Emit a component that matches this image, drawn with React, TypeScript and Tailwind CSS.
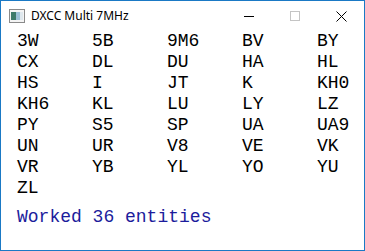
import React from "react";

const calls = [
  "3W", "5B", "9M6", "BV", "BY",
  "CX", "DL", "DU", "HA", "HL",
  "HS", "I", "JT", "K", "KH0",
  "KH6", "KL", "LU", "LY", "LZ",
  "PY", "S5", "SP", "UA", "UA9",
  "UN", "UR", "V8", "VE", "VK",
  "VR", "YB", "YL", "YO", "YU",
  "ZL",
];

function AppIcon() {
  return (
    <svg width="16" height="14" viewBox="0 0 16 14">
      <rect x="0.5" y="0.5" width="15" height="13" fill="#f4f4f4" stroke="#8a8a8a" />
      <rect x="2" y="3" width="5" height="8" fill="#3d7a6a" />
      <rect x="7" y="3" width="4" height="8" fill="#9cc0d6" />
      <rect x="11" y="3" width="3" height="8" fill="#dfe8ee" />
    </svg>
  );
}

export default function App() {
  return (
    <div className="w-[365px] h-[251px] bg-white border border-[#1a79c5] flex flex-col overflow-hidden">
      {/* Title bar */}
      <div className="h-[30px] flex items-center shrink-0" style={{ fontFamily: "'Noto Sans', 'Liberation Sans', sans-serif" }}>
        <div className="ml-[8px] flex items-center">
          <AppIcon />
        </div>
        <span className="ml-[6px] text-[12px] text-black">DXCC Multi 7MHz</span>
        <div className="ml-auto flex items-center h-full">
          <div className="w-[46px] h-full flex items-center justify-center">
            <div className="w-[10px] h-px bg-black" />
          </div>
          <div className="w-[46px] h-full flex items-center justify-center">
            <div className="w-[10px] h-[10px] border border-[#c4c4c4]" />
          </div>
          <div className="w-[46px] h-full flex items-center justify-center">
            <svg width="11" height="11" viewBox="0 0 11 11">
              <path d="M0.5 0.5 L10.5 10.5 M10.5 0.5 L0.5 10.5" stroke="#000" strokeWidth="1" />
            </svg>
          </div>
        </div>
      </div>

      {/* Client area */}
      <div
        className="pl-[16px] pt-[0px] text-[18px] leading-[21px] text-black"
        style={{ fontFamily: "'Liberation Mono', monospace" }}
      >
        <div className="grid grid-cols-[75px_75px_75px_75px_75px]">
          {calls.map((c) => (
            <div key={c}>{c}</div>
          ))}
        </div>
        <div className="mt-[8px] text-[#1c1c9c]">Worked 36 entities</div>
      </div>
    </div>
  );
}
